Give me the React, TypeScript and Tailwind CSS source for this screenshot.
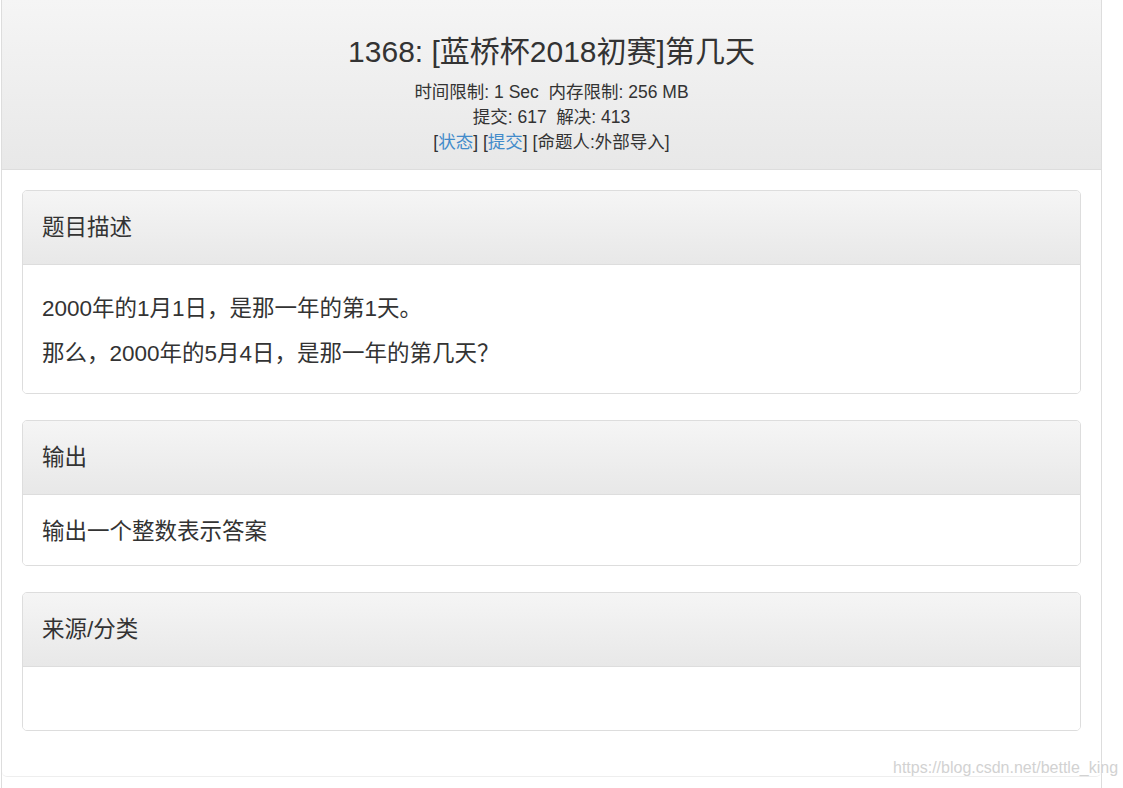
import React from "react";

const font = { fontFamily: '"Liberation Sans", Arial, "Noto Sans CJK SC", sans-serif' };

function Panel({ title, children, bodyClass }: { title: string; children?: React.ReactNode; bodyClass: string }) {
  return (
    <div className="border border-[#dddddd] rounded-[5px] overflow-hidden">
      <div className="h-[74px] flex items-center px-[19px] bg-gradient-to-b from-[#f5f5f5] to-[#e8e8e8] border-b border-[#dddddd] text-[22.5px] text-[#333]">
        {title}
      </div>
      <div className={"bg-white px-[19px] text-[22.5px] text-[#333] " + bodyClass}>{children}</div>
    </div>
  );
}

export default function App() {
  return (
    <div className="relative w-[1123px] h-[788px] bg-white overflow-hidden" style={font}>
      <div className="ml-px w-[1101px] h-[788px] border-x border-[#dddddd]">
        <div className="h-[777px] border-b border-[#eeeeee] rounded-b-[5px]">
          <div className="h-[170px] bg-gradient-to-b from-[#f5f5f5] to-[#e8e8e8] border-b border-[#dddddd] text-center text-[#333] pt-[34px]">
            <div className="text-[30px] leading-[36px]">1368: [蓝桥杯2018初赛]第几天</div>
            <div className="mt-[10px] text-[17.5px] leading-[25px]">
              <div>时间限制: 1 Sec&nbsp;&nbsp;内存限制: 256 MB</div>
              <div>提交: 617&nbsp;&nbsp;解决: 413</div>
              <div>
                [<span className="text-[#428bca]">状态</span>] [<span className="text-[#428bca]">提交</span>] [命题人:外部导入]
              </div>
            </div>
          </div>
          <div className="px-[20px] pt-[20px] flex flex-col gap-[26px]">
            <Panel title="题目描述" bodyClass="h-[128px] pt-[29px] leading-[30px] flex flex-col gap-[15px]">
              <div>2000年的1月1日，是那一年的第1天。</div>
              <div>那么，2000年的5月4日，是那一年的第几天？</div>
            </Panel>
            <Panel title="输出" bodyClass="h-[70px] pt-[3px] flex items-center">
              输出一个整数表示答案
            </Panel>
            <Panel title="来源/分类" bodyClass="h-[63px]" />
          </div>
        </div>
      </div>
      <div
        className="absolute left-[893px] top-[758px] text-[16px] text-[#d2d2d2] leading-[20px] whitespace-nowrap"
        style={{ textShadow: "0 0 2px #fff" }}
      >
        https://blog.csdn.net/bettle_king
      </div>
    </div>
  );
}
